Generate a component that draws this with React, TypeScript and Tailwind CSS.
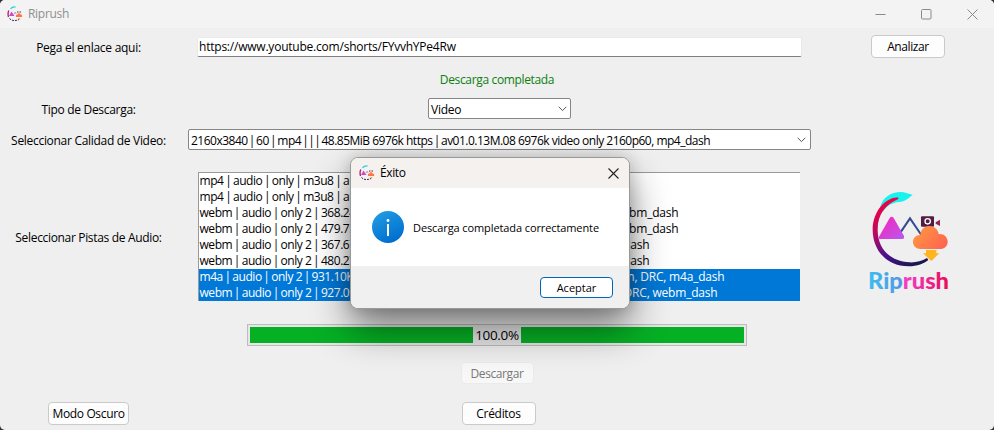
import type { ReactNode } from 'react';

const tracks = [
  { left: 'mp4 | audio | only | m3u8 | au', right: '' },
  { left: 'mp4 | audio | only | m3u8 | au', right: '' },
  { left: 'webm | audio | only 2 | 368.24', right: 'ebm_dash' },
  { left: 'webm | audio | only 2 | 479.75', right: 'ebm_dash' },
  { left: 'webm | audio | only 2 | 367.67', right: 'dash' },
  { left: 'webm | audio | only 2 | 480.27', right: 'dash' },
  { left: 'm4a | audio | only 2 | 931.10K', right: 'm, DRC, m4a_dash', selected: true },
  { left: 'webm | audio | only 2 | 927.09', right: 'DRC, webm_dash', selected: true },
];

const trackEnds = ['', '', 'w-[479px]', 'w-[479px]', 'w-[450px]', 'w-[450px]', 'w-[525px]', 'w-[518px]'];

function Row({ className, label, children, side }: { className: string; label?: ReactNode; children?: ReactNode; side?: ReactNode }) {
  return (
    <div className={`flex shrink-0 items-center ${className}`}>
      <div className="flex w-[177px] shrink-0 justify-center">{label}</div>
      <div className="flex w-[645px] shrink-0 justify-center">{children}</div>
      <div className="flex w-[172px] shrink-0 justify-center">{side}</div>
    </div>
  );
}

function Button({ className, children }: { className: string; children: ReactNode }) {
  return (
    <button className={`flex items-center justify-center rounded-[4px] border pt-px ${className}`}>{children}</button>
  );
}

// Sets the separators of a format description narrower than the font's own bar.
function Piped({ text, bar }: { text: string; bar: string }) {
  return text.split('|').map((part, i) => (
    <span key={i}>
      {i > 0 && <span className={bar}>|</span>}
      {part}
    </span>
  ));
}

function Chevron() {
  return (
    <svg width="9" height="6" viewBox="0 0 9 6" fill="none" stroke="#555" strokeWidth="1">
      <path d="M.7.8 4.5 4.6 8.3.8" />
    </svg>
  );
}

function MiniLogo() {
  return (
    <svg width="16" height="16" viewBox="0 0 16 16" fill="none">
      <path d="M3.500 3C4.500 1.500 6 .8 8.5 1" stroke="#22d3e0" strokeWidth="1.3" />
      <path d="M1.800 4.500C.9 6.500.9 9 1.500 11" stroke="#b01870" strokeWidth="1.3" />
      <path d="M2.500 12.500C4.500 14.800 8 15.300 12 13.500" stroke="#432077" strokeWidth="1" strokeDasharray="2 1" />
      <path d="m2 10 2.500-4.500L7.500 10Z" fill="#d246c8" />
      <path d="m7 8 1.200-1.800L9.200 8" stroke="#7a6aa5" strokeWidth=".6" />
      <path d="M10 6h1.500M12.500 6H14" stroke="#532449" strokeWidth="1" />
      <path d="M9 11c-.6-2 .7-2.300 1.500-2.500C11 6.700 13.300 7 13.500 8.500c1.800.2 2 1.500 1.500 2.500Z" fill="#ff7548" />
      <path d="m11 12 1.500 2 1-2Z" fill="#ffb020" />
    </svg>
  );
}

function Logo() {
  return (
    <svg width="120" height="120" viewBox="0 0 360 360" className="shrink-0">
      <defs>
        <linearGradient id="arc" x1="120" y1="50" x2="210" y2="255" gradientUnits="userSpaceOnUse">
          <stop stopColor="#f50040" /><stop offset=".4" stopColor="#b40a65" /><stop offset=".7" stopColor="#4b118f" /><stop offset="1" stopColor="#171747" />
        </linearGradient>
        <linearGradient id="tri" x1="100" y1="120" x2="155" y2="180" gradientUnits="userSpaceOnUse">
          <stop stopColor="#f02bc1" /><stop offset="1" stopColor="#b958ef" />
        </linearGradient>
        <linearGradient id="cloud" x1="200" y1="150" x2="270" y2="210" gradientUnits="userSpaceOnUse">
          <stop stopColor="#ff9442" /><stop offset="1" stopColor="#ff674f" />
        </linearGradient>
        <linearGradient id="word" x1="58" y1="0" x2="296" y2="0" gradientUnits="userSpaceOnUse">
          <stop stopColor="#3bbcf0" /><stop offset=".42" stopColor="#5795e4" /><stop offset=".44" stopColor="#f43fc5" /><stop offset=".7" stopColor="#ef269a" /><stop offset="1" stopColor="#e80d55" />
        </linearGradient>
      </defs>
      <path d="M91 80C98 51 126 36 151 36C166 36 177 43 188 44C176 55 165 64 147 66C127 68 111 76 98 96Z" fill="#18f3ed" />
      <path d="M145 53C112 49 68 91 68 149C68 211 111 259 176 259C202 259 222 250 235 240L231 234C214 244 197 248 178 247C122 244 83 208 83 149C83 102 107 73 145 57Z" fill="url(#arc)" />
      <path d="m151 158 29-43 34 50" fill="none" stroke="#354b91" strokeWidth="6" />
      <path d="M119 114q6-8 12 0l31 54q2 9-5 9H91q-7 0-4-7Z" fill="url(#tri)" />
      <rect x="213" y="109" width="39" height="31" rx="3" fill="#541b43" />
      <path d="m257 127 13-8v19l-13-7Z" fill="#8d2859" />
      <circle cx="233" cy="124" r="8" fill="#541b43" stroke="#fff" strokeWidth="4" />
      <path d="M212 207c-13 0-23-9-23-21 0-13 10-22 22-21 1-16 12-27 26-27 15 0 27 9 29 24 15-2 27 9 27 23 0 13-10 22-23 22Z" fill="url(#cloud)" />
      <path d="M228 210h31v10h9l-24 23-25-23h9Z" fill="#ffb520" />
      <text x="54" y="327" textLength="243" lengthAdjust="spacingAndGlyphs" fontFamily="Lato, sans-serif" fontWeight="900" fontSize="66" fill="url(#word)">Riprush</text>
    </svg>
  );
}

function Dialog() {
  return (
    <div className="absolute left-[350px] top-[157px] flex h-[152px] w-[280px] flex-col overflow-hidden rounded-[8px] border border-[#999] bg-white shadow-[0_20px_38px_rgba(0,0,0,0.48),0_0_16px_rgba(0,0,0,0.18)]">
      <div className="flex h-[30px] shrink-0 items-center bg-[#f5f1ef] pl-[8px] pr-[10px]">
        <MiniLogo />
        <span className="ml-[5px] flex-1 tracking-[-0.400px]">Éxito</span>
        <svg width="11" height="11" viewBox="0 0 11 11" stroke="#222" strokeWidth="1.1"><path d="m.5.5 10 10M10.500.5l-10 10" /></svg>
      </div>
      <div className="flex h-[78px] shrink-0 items-center pl-[21px]">
        <svg width="32" height="32" viewBox="0 0 32 32">
          <defs><linearGradient id="info" x1="0" y1="0" x2="0.5" y2="1"><stop stopColor="#25a0e5" /><stop offset="1" stopColor="#0070cf" /></linearGradient></defs>
          <circle cx="16" cy="16" r="16" fill="url(#info)" />
          <circle cx="16" cy="9.500" r="1.400" fill="#fff" />
          <path d="M16 13v12" stroke="#fff" strokeWidth="2" />
        </svg>
        <span className="ml-[9px] mt-px text-[11px] tracking-[-0.100px]">Descarga completada correctamente</span>
      </div>
      <div className="flex flex-1 items-center justify-end bg-[#f0f0f0] pr-[16px]">
        <Button className="h-[21px] w-[73px] border-[#0067b8] bg-white text-[11px] tracking-[0px]">Aceptar</Button>
      </div>
    </div>
  );
}

export default function App() {
  return (
    <div className="h-[430px] w-[994px] overflow-hidden bg-[#303030]">
      <div className="relative flex h-[430px] w-[994px] flex-col overflow-hidden rounded-[5px] bg-[#efefef] font-['Open_Sans','Noto_Sans',sans-serif] text-[12px] leading-[16px] whitespace-pre text-black">
        <header className="flex h-[29px] shrink-0 items-center border-b border-[#eeeeee] bg-[#f3f3f3] pl-[7px] pr-[16px] text-[#8f8f8f]">
          <MiniLogo />
          <span className="ml-[5px] flex-1 tracking-[-0.300px]">Riprush</span>
          <div className="flex items-center gap-[35px]">
            <svg width="11" height="11" viewBox="0 0 11 11" stroke="#8a8a8a"><path d="M.5 5.500h10" /></svg>
            <svg width="11" height="11" viewBox="0 0 11 11" fill="none" stroke="#8a8a8a"><rect x=".5" y=".5" width="9.500" height="9.500" rx="1" /></svg>
            <svg width="11" height="11" viewBox="0 0 11 11" stroke="#8a8a8a"><path d="m.5.5 10 10M10.500.5l-10 10" /></svg>
          </div>
        </header>

        <Row
          className="h-[36px]"
          label={<span className="mt-px tracking-[-0.270px]">Pega el enlace aqui:</span>}
          side={<Button className="mb-px h-[23px] w-[74px] border-[#cacaca] bg-[#fdfdfd] tracking-[-0.400px]">Analizar</Button>}
        >
          <div className="flex h-[20px] w-[605px] items-center rounded-[2px] border border-[#e8e8e8] border-b-[#808080] bg-white pl-px tracking-[-0.220px]">
            <span>https://www.youtube.com/shorts/FYvvhYPe4Rw</span>
          </div>
        </Row>
        <Row className="h-[28px]">
          <span className="ml-[-5px] mt-px tracking-[-0.350px] text-[#0b800f]">Descarga completada</span>
        </Row>
        <Row className="h-[31px]" label={<span className="mt-[2px] tracking-[-0.300px]">Tipo de Descarga:</span>}>
          <div className="flex h-[21px] w-[143px] items-center justify-between rounded-[2px] border border-[#858585] bg-white pl-[2px] pr-[3px]">
            <span className="mt-[2px] tracking-[-0.250px]">Video</span>
            <Chevron />
          </div>
        </Row>
        <Row className="h-[31px]" label={<span className="mt-[2px] tracking-[-0.300px]">Seleccionar Calidad de Video:</span>}>
          <div className="flex h-[21px] w-[623px] items-center justify-between rounded-[2px] border border-[#858585] bg-white pl-[2px] pr-[4px]">
            <span className="mt-[2px] tracking-[-0.510px]"><Piped bar="-mx-[1.4px]" text="2160x3840 | 60 | mp4 | | | 48.85MiB 6976k https | av01.0.13M.08 6976k video only 2160p60, mp4_dash" /></span>
            <Chevron />
          </div>
        </Row>
        <Row className="h-[163px]" label={<span className="mt-[2px] tracking-[-0.330px]">Seleccionar Pistas de Audio:</span>} side={<div className="ml-[4px] mt-[7px]"><Logo /></div>}>
          <div className="mr-[2px] h-[129px] w-[602px] border-l border-t border-[#999] bg-white">
            {tracks.map((track, i) => (
              <div key={i} className={`flex h-[16px] items-center pl-px ${track.selected ? 'bg-[#0078d7] text-white' : ''}`}>
                <div className={`flex justify-between ${trackEnds[i]}`}>
                  <span className="tracking-[-0.450px]"><Piped bar="-mx-[1px]" text={track.left} /></span>
                  <span className="tracking-[-0.200px]">{track.right}</span>
                </div>
              </div>
            ))}
          </div>
        </Row>
        <Row className="h-[34px]">
          <div className="mr-[5px] flex h-[22px] w-[500px] items-center border border-[#bcbcbc] bg-[#e6e6e6] p-[2px]">
            <div className="flex h-[16px] w-full items-center justify-center bg-[#06b025]">
              <span className="flex h-[20px] w-[48px] items-center justify-center bg-[#e6e6e6] text-[13.5px] tracking-[-0.350px]">100.0%</span>
            </div>
          </div>
        </Row>
        <Row className="h-[42px]">
          <Button className="mr-[5px] h-[22px] w-[73px] border-[#ebebeb] bg-[#f7f7f7] tracking-[-0.400px] text-[#777]">Descargar</Button>
        </Row>
        <Row className="h-[36px] pt-[3px]" label={<Button className="h-[23px] w-[81px] border-[#cacaca] bg-[#fdfdfd] tracking-[-0.350px]">Modo Oscuro</Button>}>
          <Button className="mr-[2px] h-[23px] w-[74px] border-[#cacaca] bg-[#fdfdfd] tracking-[-0.300px]">Créditos</Button>
        </Row>
        <Dialog />
      </div>
    </div>
  );
}
